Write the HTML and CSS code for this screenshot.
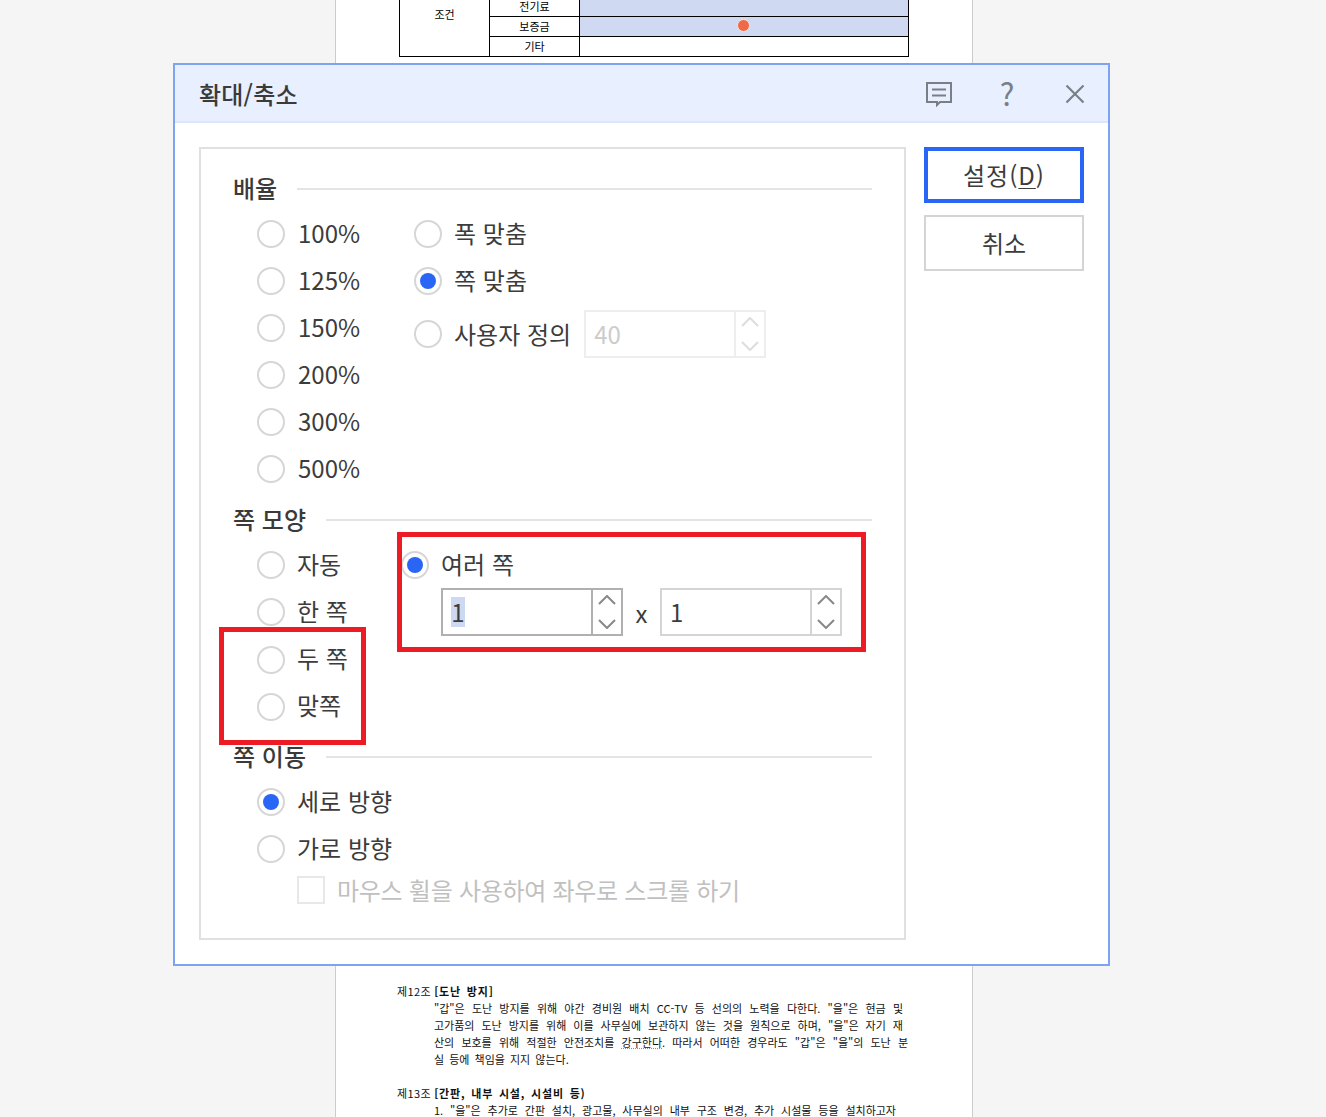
FILE: index.html
```html
<!DOCTYPE html>
<html lang="ko"><head>
  <meta charset="UTF-8"/>
  <title>확대/축소</title>
  <link rel="stylesheet" href="styles.css">
</head><body>
  <div class="paper">
    <table class="doc-table">
      <tr><td class="head" rowspan="3">조건</td><td class="label">전기료</td><td class="val"></td></tr>
      <tr><td class="label">보증금</td><td class="val"><span class="dot"></span></td></tr>
      <tr><td class="label">기타</td><td></td></tr>
    </table>
    <div class="doc-text">
      <div class="art"><span class="no">제12조</span> <b>[도난 방지]</b></div>
      <div class="ln">"갑"은 도난 방지를 위해 야간 경비원 배치 CC-TV 등 선의의 노력을 다한다. "을"은 현금 및</div>
      <div class="ln">고가품의 도난 방지를 위해 이를 사무실에 보관하지 않는 것을 원칙으로 하며, "을"은 자기 재</div>
      <div class="ln long">산의 보호를 위해 적절한 안전조치를 <span class="typo">강구한다</span>. 따라서 어떠한 경우라도 "갑"은 "을"의 도난 분</div>
      <div class="ln end">실 등에 책임을 지지 않는다.</div>
      <div class="art gap"><span class="no">제13조</span> <b>[간판, 내부 시설, 시설비 등)</b></div>
      <div class="ln short">1. "을"은 추가로 간판 설치, 광고물, 사무실의 내부 구조 변경, 추가 시설물 등을 설치하고자</div>
    </div>
  </div>

  <div class="dialog">
    <div class="titlebar">
      <div class="title">확대/축소</div>
      <svg class="ic-note" width="28" height="26" viewBox="0 0 28 26"><path d="M2 2h24v19H15l-3 3v-3H2z" fill="none" stroke="#7a7e87" stroke-width="2"/><path d="M7 8.500h14M7 14.500h14" stroke="#7a7e87" stroke-width="2"/></svg>
      <div class="ic-help">?</div>
      <svg class="ic-close" width="20" height="20" viewBox="0 0 20 20"><path d="M1.500 1.500l17 17M18.500 1.500l-17 17" stroke="#7a7e87" stroke-width="2.200"/></svg>
    </div>
    <div class="body">
      <div class="panel">
        <div class="legend">배율</div>
        <div class="opts">
          <div class="col col1">
            <div class="row"><span class="radio"></span><span class="txt">100%</span></div>
            <div class="row"><span class="radio"></span><span class="txt">125%</span></div>
            <div class="row"><span class="radio"></span><span class="txt">150%</span></div>
            <div class="row"><span class="radio"></span><span class="txt">200%</span></div>
            <div class="row"><span class="radio"></span><span class="txt">300%</span></div>
            <div class="row"><span class="radio"></span><span class="txt">500%</span></div>
          </div>
          <div class="col">
            <div class="row"><span class="radio"></span><span class="txt">폭 맞춤</span></div>
            <div class="row"><span class="radio on"></span><span class="txt">쪽 맞춤</span></div>
            <div class="row row-custom"><span class="radio"></span><span class="txt">사용자 정의</span>
              <div class="spin off">
                <div class="spin-val">40</div>
                <div class="spin-btns">
                  <svg width="18" height="10" viewBox="0 0 18 10"><path d="M1 9l8-8 8 8" fill="none" stroke="#ddd" stroke-width="2"/></svg>
                  <svg width="18" height="10" viewBox="0 0 18 10"><path d="M1 1l8 8 8-8" fill="none" stroke="#ddd" stroke-width="2"/></svg>
                </div>
              </div>
            </div>
          </div>
        </div>

        <div class="legend sec2">쪽 모양</div>
        <div class="opts">
          <div class="col col2">
            <div class="row"><span class="radio"></span><span class="txt">자동</span></div>
            <div class="row"><span class="radio"></span><span class="txt">한 쪽</span></div>
            <div class="row"><span class="radio"></span><span class="txt">두 쪽</span></div>
            <div class="row"><span class="radio"></span><span class="txt">맞쪽</span></div>
          </div>
          <div class="col">
            <div class="row row-multi"><span class="radio on"></span><span class="txt">여러 쪽</span></div>
            <div class="spins">
              <div class="spin active">
                <div class="spin-val"><span class="sel">1</span></div>
                <div class="spin-btns">
                  <svg width="18" height="10" viewBox="0 0 18 10"><path d="M1 9l8-8 8 8" fill="none" stroke="#888" stroke-width="2"/></svg>
                  <svg width="18" height="10" viewBox="0 0 18 10"><path d="M1 1l8 8 8-8" fill="none" stroke="#888" stroke-width="2"/></svg>
                </div>
              </div>
              <div class="times">x</div>
              <div class="spin">
                <div class="spin-val">1</div>
                <div class="spin-btns">
                  <svg width="18" height="10" viewBox="0 0 18 10"><path d="M1 9l8-8 8 8" fill="none" stroke="#888" stroke-width="2"/></svg>
                  <svg width="18" height="10" viewBox="0 0 18 10"><path d="M1 1l8 8 8-8" fill="none" stroke="#888" stroke-width="2"/></svg>
                </div>
              </div>
            </div>
          </div>
        </div>

        <div class="legend sec3">쪽 이동</div>
        <div class="opts">
          <div class="col">
            <div class="row"><span class="radio on"></span><span class="txt">세로 방향</span></div>
            <div class="row"><span class="radio"></span><span class="txt">가로 방향</span></div>
            <div class="check-row"><span class="check"></span><span class="txt">마우스 휠을 사용하여 좌우로 스크롤 하기</span></div>
          </div>
        </div>
      </div>
      <div class="side">
        <div class="btn primary">설정(<u>D</u>)</div>
        <div class="btn">취소</div>
      </div>
    </div>
  </div>

  <!-- red marks drawn over the screenshot -->
  <div class="mark mark-multi"></div>
  <div class="mark mark-two"></div>
</body></html>
```

FILE: styles.css
```css
* {box-sizing:border-box}
html,body {margin:0;height:1117px;overflow:hidden}
body {background:#f5f5f5;font-family:"Noto Sans CJK KR","Noto Sans",sans-serif;color:#3c3c3c}

/* document behind the dialog */
.paper {width:638px;height:1117px;margin-left:335px;background:#fff;
        border-left:1px solid #ccc;border-right:1px solid #ccc;
        display:flex;flex-direction:column;justify-content:space-between;overflow:hidden}
.doc-table {width:510px;margin:-4px 0 0 63px;border-collapse:collapse;table-layout:fixed;
            font-size:11px;color:#000;text-align:center}
.doc-table td {border:1px solid #000;height:20px;padding:0 0 2px;line-height:10px}
.doc-table .head {width:90px;vertical-align:top;line-height:34px}
.doc-table .label {width:90px}
.doc-table .val {background:#cfd9f2}
.dot {display:block;width:13px;height:13px;margin:0 auto;border-radius:50%;position:relative;left:-1px;
      background:#f16a47;border:1px solid #fbe3dc}
.doc-text {padding:0 69px 0 61px;font-size:11px;line-height:17px;height:134px;color:#111}
.art {white-space:pre-wrap}
.art b {font-weight:700;letter-spacing:.8px;word-spacing:2px}
.art .no {letter-spacing:.4px}
.art.gap {margin-top:17px}
.ln {margin-left:37px;text-align:justify;text-align-last:justify;white-space:nowrap}
.ln.end {text-align-last:left;word-spacing:2px}
.ln.long {margin-right:-5px}
.ln.short {margin-right:7px}
.typo {text-decoration:underline dotted #e07b20}

/* dialog */
.dialog {position:absolute;left:173px;top:63px;width:937px;height:903px;background:#fff;
         border:2px solid #7ea3f5}
.titlebar {height:58px;background:#e8effe;border-bottom:2px solid #dce6fb;
           display:flex;align-items:center;padding-left:24px}
.title {font-size:24px;font-weight:500;flex:1;color:#3a3a3a;letter-spacing:.2px}
.ic-note {margin:2px 0 0 0;display:block}
.ic-help {width:18px;margin:0 49px 0 45px;font-size:31px;line-height:40px;color:#7a7e87;text-align:center}
.ic-close {margin:2px 23px 0 0;display:block}

.body {display:flex;padding:24px 24px 0}
.panel {width:707px;height:793px;border:2px solid #e0e0e0;padding:24px 32px 0 32px}
.side {margin-left:18px;width:160px;display:flex;flex-direction:column;gap:12px}
.btn {height:56px;border:2px solid #d4d4d4;padding-bottom:2px;display:flex;align-items:center;justify-content:center;
      font-size:24px;color:#3c3c3c}
.btn.primary {border:4px solid #2966f5;letter-spacing:1px}
.btn u {text-underline-offset:3px;text-decoration-thickness:1px}

.legend {display:flex;align-items:center;gap:20px;height:30px;padding-bottom:2px;font-size:24px;font-weight:500;
         margin-bottom:7px;color:#3a3a3a}
.legend::after {content:"";flex:1;height:2px;margin-top:4px;background:#e4e4e4}
.legend.sec2 {margin-top:12px}
.legend.sec3 {margin-top:11px}

.opts {display:flex;padding-left:24px}
.col1 {width:157px}
.col2 {width:144px}
.row {display:flex;height:47px;padding-top:10px;gap:12px}
.col1 .row {gap:13px}
.row .txt,.check-row .txt {font-size:24px;line-height:28px;margin-top:-1px;white-space:nowrap}
.col2 .row {height:47.330px}
.col2 .row:nth-child(n+3) .txt {margin-top:-2px}
.radio {display:block;flex:none;width:28px;height:28px;border-radius:50%;border:2px solid #d6d6d6;
        background:#fff;position:relative}
.radio.on::after {content:"";position:absolute;left:4px;top:4px;width:16px;height:16px;
                  border-radius:50%;background:#2966f5}
.row-custom {height:48px;padding:0;margin-top:6px;align-items:center;gap:12px}

.spins {display:flex;margin-left:40px}
.times {width:37px;font-size:24px;line-height:50px;text-align:center}
.spin {display:flex;width:182px;height:48px;border:2px solid #d4d4d4;background:#fff}
.spin.active {border-color:#b0b0b0}
.spin.off {border-color:#eee;margin-left:1px}
.spin-val {flex:1;padding-left:8px;font-size:24px;line-height:44px;color:#3c3c3c}
.spin.off .spin-val {color:#ccc}
.sel {display:inline-block;width:14px;height:30px;line-height:30px;margin-top:7px;background:#cdd9f2;
      text-align:center;vertical-align:top}
.spin-btns {width:30px;border-left:2px solid #d4d4d4;display:flex;flex-direction:column;
            align-items:center;justify-content:center;gap:14px}
.spin.active .spin-btns {border-color:#b0b0b0}
.spin.off .spin-btns {border-color:#eee}
.spin-btns svg {display:block}

.check-row {display:flex;align-items:center;gap:12px;margin-left:40px;margin-top:4px}
.check {display:block;width:28px;height:28px;border:2px solid #e8e8e8;background:#fff}
.check-row .txt {color:#c0c0c0;letter-spacing:-.28px}

/* annotations */
.mark {position:absolute;border:5px solid #ed1c24}
.mark-multi {left:397px;top:532px;width:469px;height:120px}
.mark-two {left:219px;top:627px;width:147px;height:118px}
```
